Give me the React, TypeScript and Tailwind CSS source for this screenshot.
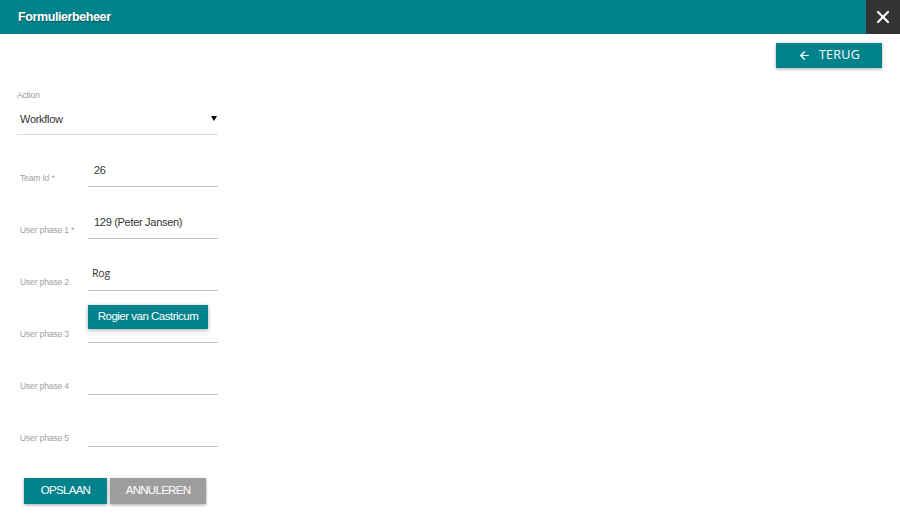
import React from 'react';
import { X, ArrowLeft } from 'lucide-react';

const rows = [
  { label: 'Team Id *', value: '26' },
  { label: 'User phase 1 *', value: '129 (Peter Jansen)' },
  { label: 'User phase 2', value: 'Rog', open: true },
  { label: 'User phase 3', value: '' },
  { label: 'User phase 4', value: '' },
  { label: 'User phase 5', value: '' },
];

const FieldRow: React.FC<{ label: string; value: string; open?: boolean }> = ({ label, value, open }) => (
  <div className="relative flex h-[52px] items-end">
    <div className="w-[71px] pb-[2px] pl-[3px] text-[8.5px] tracking-[-0.15px] text-[#a0a0a0]">{label}</div>
    <div className="flex h-[26px] w-[130px] items-start border-b border-[#c4c4c4] pl-[6px] pt-[1px] text-[11px] tracking-[-0.3px] text-[#333]">
      <span className={open ? "-ml-[2px] font-['Open_Sans',sans-serif] text-[10.5px] tracking-[-0.2px]" : ''}>{value}</span>
    </div>
    {open && (
      <div className="absolute left-[71px] top-[66px] z-10 flex h-[24px] w-[120px] items-center justify-center bg-[#02838c] text-[11.5px] tracking-[-0.5px] text-white shadow-[0_1px_4px_rgba(0,0,0,0.35)]">
        Rogier van Castricum
      </div>
    )}
  </div>
);

export default function App() {
  return (
    <div className="h-[520px] w-[900px] overflow-hidden bg-white font-['Liberation_Sans',Arial,sans-serif]">
      {/* Header */}
      <div className="flex h-[34px] bg-[#02828b]">
        <div className="flex flex-1 items-center pl-[18px] text-[12.5px] font-bold tracking-[-0.4px] text-white [text-shadow:0_1px_1px_rgba(0,0,0,0.4)]">
          Formulierbeheer
        </div>
        <div className="flex w-[34px] items-center justify-center bg-[#333335] text-white">
          <X size={20} strokeWidth={2.6} />
        </div>
      </div>

      {/* Back button */}
      <div className="flex justify-end pr-[18px] pt-[9px]">
        <div className="flex h-[25px] w-[106px] items-center justify-center gap-[8px] bg-[#02838c] font-['Open_Sans',sans-serif] text-[12.5px] tracking-[0.3px] text-white shadow-[0_1px_3px_rgba(0,0,0,0.35)]">
          <ArrowLeft size={13} strokeWidth={2.2} />
          <span>TERUG</span>
        </div>
      </div>

      {/* Form */}
      <div className="w-[218px] pl-[17px] pt-[22px]">
        <div className="text-[8.5px] leading-[10px] tracking-[-0.15px] text-[#9a9a9a]">Action</div>
        <div className="mt-[10px] flex h-[25px] items-start justify-between border-b border-[#dcdcdc] pl-[3px] pr-[1px] pt-[1px] text-[11px] tracking-[-0.3px] text-[#333]">
          <span>Workflow</span>
          <span className="mt-[5px] h-0 w-0 border-x-[3px] border-t-[5px] border-x-transparent border-t-black" />
        </div>
        <div>
          {rows.map((r) => (
            <FieldRow key={r.label} label={r.label} value={r.value} open={r.open} />
          ))}
        </div>
      </div>

      {/* Actions */}
      <div className="flex gap-[3px] pl-[24px] pt-[31px] text-[11.5px] tracking-[-0.7px] text-white">
        <div className="flex h-[26px] w-[83px] items-center justify-center bg-[#02838c] shadow-[0_1px_3px_rgba(0,0,0,0.35)]">
          OPSLAAN
        </div>
        <div className="flex h-[26px] w-[96px] items-center justify-center bg-[#9e9e9e] shadow-[0_1px_3px_rgba(0,0,0,0.35)]">
          ANNULEREN
        </div>
      </div>
    </div>
  );
}
